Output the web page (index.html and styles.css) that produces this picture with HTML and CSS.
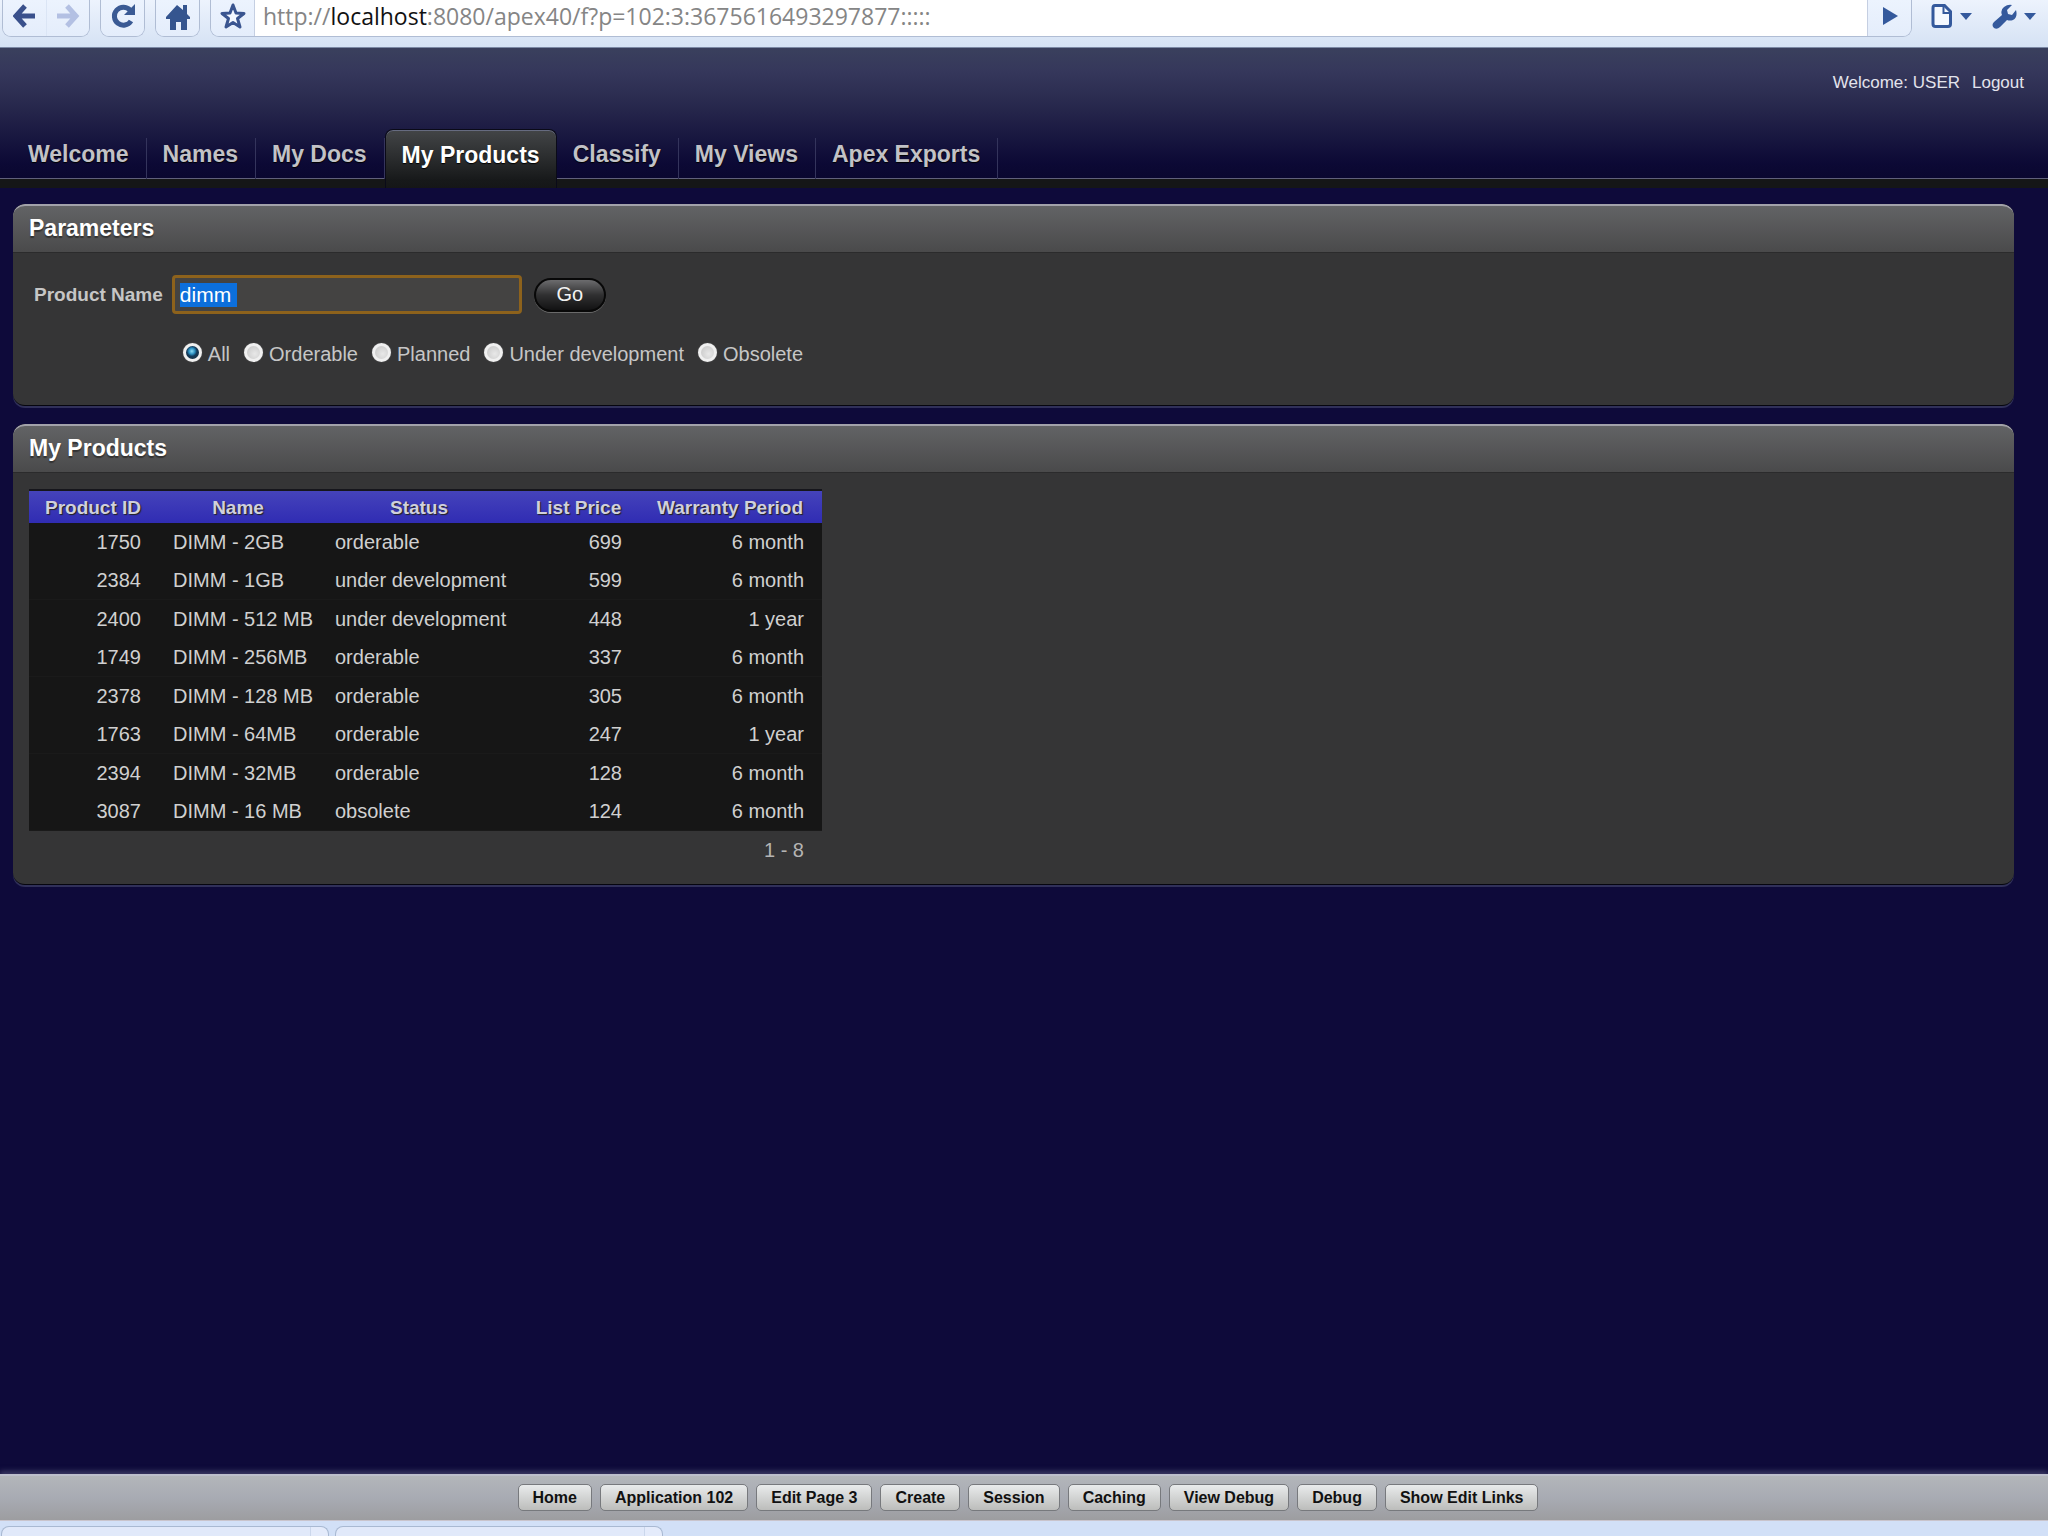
FILE: index.html
```html
<!DOCTYPE html>
<html lang="en">
<head>
  <meta charset="UTF-8">
  <meta name="viewport" content="width=device-width, initial-scale=1.0">
  <title>My Products</title>
  <link rel="stylesheet" href="styles.css">
</head>
<body>

<div class="toolbar">
  <div class="tool-group">
    <button class="tool" aria-label="Back">
      <svg width="24" height="24" viewBox="0 0 24 24"><path d="M12 2L3 12l9 10M3 12h19" fill="none" stroke="#39508c" stroke-width="5"/></svg>
    </button>
    <button class="tool tool-next" aria-label="Forward">
      <svg width="24" height="24" viewBox="0 0 24 24"><path d="M11 2l9 10-9 10M20 12H1" fill="none" stroke="#b3c0e3" stroke-width="5"/></svg>
    </button>
  </div>
  <div class="tool-group">
    <button class="tool" aria-label="Reload">
      <svg width="26" height="26" viewBox="0 0 26 26"><path d="M20 7a9 9 0 1 0 1 11" fill="none" stroke="#3a5a94" stroke-width="5"/><path d="M25 1v11H14z" fill="#3a5a94"/></svg>
    </button>
  </div>
  <div class="tool-group">
    <button class="tool" aria-label="Home">
      <svg width="26" height="28" viewBox="0 0 26 28"><path d="M12 3l6 5V3h4v9l3 3v2h-3v11h-6v-8h-5v8H5V17H1v-2z" fill="#35558f"/></svg>
    </button>
  </div>
  <div class="omnibox">
    <button class="tool" aria-label="Bookmark this page">
      <svg width="28" height="28" viewBox="0 0 28 28"><path d="M14 3l3 8 8 .5-6.500 5L21 25l-7-4.500L7 25l2.500-8.500L3 11.500l8-.5z" fill="#f4f8ff" stroke="#3a5590" stroke-width="3" stroke-linejoin="round"/></svg>
    </button>
    <div class="address" role="textbox" aria-label="Address">http://<span class="host">localhost</span>:8080/apex40/f?p=102:3:3675616493297877:::::</div>
    <button class="tool" aria-label="Go to address">
      <svg width="20" height="20" viewBox="0 0 20 20"><path d="M3 1l15 9-15 9z" fill="#34599c"/></svg>
    </button>
  </div>
  <div class="menus">
    <button class="menu" aria-label="Page menu">
      <svg width="22" height="26" viewBox="0 0 22 26"><path d="M4 2.500h9.500l6 6V21q0 2.500-2.500 2.500H4.500Q2 23.500 2 21V5q0-2.500 2-2.500z" fill="#f4f8ff" stroke="#34599c" stroke-width="3"/><path d="M12.500 3v7H20" fill="none" stroke="#34599c" stroke-width="2"/></svg>
      <svg width="12" height="8" viewBox="0 0 12 8"><path d="M0 1h12L6 8z" fill="#34599c"/></svg>
    </button>
    <button class="menu" aria-label="Tools menu">
      <svg width="25" height="25" viewBox="0 0 25 25"><path d="M20 1l-5 5 1 4 4 1 4-5q2 7-3 10-3 1-6 0l-7 7q-3 3-6 1-3-3 0-6l8-7Q8 6 12 3q4-3 8-2z" fill="#34599c"/></svg>
      <svg width="12" height="8" viewBox="0 0 12 8"><path d="M0 1h12L6 8z" fill="#34599c"/></svg>
    </button>
  </div>
</div>

<header class="header">
  <div class="user-links">
    <span>Welcome: USER</span>
    <a href="#">Logout</a>
  </div>
  <nav class="tabs">
    <a class="tab" href="#">Welcome</a>
    <a class="tab" href="#">Names</a>
    <a class="tab" href="#">My Docs</a>
    <a class="tab active" href="#">My Products</a>
    <a class="tab" href="#">Classify</a>
    <a class="tab" href="#">My Views</a>
    <a class="tab" href="#">Apex Exports</a>
  </nav>
</header>

<main class="content">
  <section class="region">
    <h2 class="region-title">Parameters</h2>
    <form class="params">
      <label class="field-label" for="product-name">Product Name</label>
      <div class="field">
        <input class="text-field" type="text" id="product-name" value="dimm ">
        <button class="go-btn" type="button">Go</button>
      </div>
      <div class="radios">
        <label class="radio"><input type="radio" name="status" checked>All</label>
        <label class="radio"><input type="radio" name="status">Orderable</label>
        <label class="radio"><input type="radio" name="status">Planned</label>
        <label class="radio"><input type="radio" name="status">Under development</label>
        <label class="radio"><input type="radio" name="status">Obsolete</label>
      </div>
    </form>
  </section>

  <section class="region">
    <h2 class="region-title">My Products</h2>
    <div class="report">
      <table class="report-table">
        <colgroup>
          <col class="col-id">
          <col class="col-name">
          <col class="col-status">
          <col class="col-price">
          <col class="col-warranty">
        </colgroup>
        <thead>
          <tr><th>Product ID</th><th>Name</th><th>Status</th><th>List Price</th><th>Warranty Period</th></tr>
        </thead>
        <tbody>
          <tr><td class="num">1750</td><td>DIMM - 2GB</td><td>orderable</td><td class="num">699</td><td class="num">6 month</td></tr>
          <tr><td class="num">2384</td><td>DIMM - 1GB</td><td>under development</td><td class="num">599</td><td class="num">6 month</td></tr>
          <tr><td class="num">2400</td><td>DIMM - 512 MB</td><td>under development</td><td class="num">448</td><td class="num">1 year</td></tr>
          <tr><td class="num">1749</td><td>DIMM - 256MB</td><td>orderable</td><td class="num">337</td><td class="num">6 month</td></tr>
          <tr><td class="num">2378</td><td>DIMM - 128 MB</td><td>orderable</td><td class="num">305</td><td class="num">6 month</td></tr>
          <tr><td class="num">1763</td><td>DIMM - 64MB</td><td>orderable</td><td class="num">247</td><td class="num">1 year</td></tr>
          <tr><td class="num">2394</td><td>DIMM - 32MB</td><td>orderable</td><td class="num">128</td><td class="num">6 month</td></tr>
          <tr><td class="num">3087</td><td>DIMM - 16 MB</td><td>obsolete</td><td class="num">124</td><td class="num">6 month</td></tr>
        </tbody>
        <tfoot>
          <tr><td class="num" colspan="5">1 - 8</td></tr>
        </tfoot>
      </table>
    </div>
  </section>
</main>

<footer class="dev-toolbar">
  <button class="dev-btn">Home</button>
  <button class="dev-btn">Application 102</button>
  <button class="dev-btn">Edit Page 3</button>
  <button class="dev-btn">Create</button>
  <button class="dev-btn">Session</button>
  <button class="dev-btn">Caching</button>
  <button class="dev-btn">View Debug</button>
  <button class="dev-btn">Debug</button>
  <button class="dev-btn">Show Edit Links</button>
</footer>

<div class="downloads">
  <div class="download"></div>
  <div class="download"></div>
</div>

<script>
  const productName = document.querySelector('#product-name');
  productName.focus();
  productName.select();
</script>

</body>
</html>
```
FILE: styles.css
```css
* {
  box-sizing: border-box;
}

body {
  margin: 0;
  min-height: 100vh;
  display: flex;
  flex-direction: column;
  background-color: #0e0a3a;
  color: #c6c6c6;
  font-family: "Liberation Sans", Arial, sans-serif;
  font-size: 20px;
  line-height: 24px;
}

button {
  font-family: inherit;
  cursor: pointer;
}

/* Browser toolbar */
.toolbar {
  display: flex;
  gap: 10px;
  height: 48px;
  padding: 0 12px 10px 2px;
  background: linear-gradient(#edf3fd, #d5e2f4);
  border-bottom: 1px solid #7c89a5;
}

.tool-group,
.omnibox {
  display: flex;
  border: 1px solid #b0bdd4;
  border-top: none;
  border-radius: 0 0 9px 9px;
  overflow: hidden;
}

.tool {
  display: flex;
  align-items: center;
  justify-content: center;
  width: 43px;
  padding: 0 0 5px;
  border: none;
  background: linear-gradient(#ecf3fe, #e4edfb);
}

.tool-next {
  border-left: 1px solid #dbe5f5;
}

.omnibox {
  flex: 1;
}

.address {
  flex: 1;
  padding-left: 8px;
  background: #fff;
  border-left: 1px solid #c5cfe2;
  border-right: 1px solid #c5cfe2;
  color: #858585;
  font-family: "Open Sans", "Noto Sans", sans-serif;
  font-size: 23px;
  line-height: 32px;
}

.host {
  color: #111;
}

.menus {
  display: flex;
  gap: 20px;
  padding: 0 0 5px 9px;
}

.menu {
  display: flex;
  align-items: center;
  gap: 7px;
  padding: 0;
  border: none;
  background: none;
}

/* Header and tabs */
.header {
  display: flex;
  flex-direction: column;
  height: 140px;
  background: linear-gradient(#3a405d 0, #35375b 24px, #2b2c50 50px, #0c0935 115px, #0a0730 129px, #0a0730 130px, #60607a 130px, #60607a 131px, #151617 131px);
}

.user-links {
  display: flex;
  justify-content: flex-end;
  gap: 12px;
  padding: 23px 24px 11px;
  color: #e3e3ec;
  font-size: 17px;
}

.user-links a {
  color: inherit;
  text-decoration: none;
}

.tabs {
  display: flex;
  align-items: flex-end;
  flex: 1;
  padding: 22px 12px 9px;
}

.tab {
  height: 41px;
  padding: 4px 17px 0 16px;
  border-right: 1px solid #34345c;
  color: #c2c2c6;
  font-size: 23px;
  font-weight: bold;
  text-decoration: none;
  text-shadow: 0 1px 1px #000;
}

.tab.active {
  height: 59px;
  margin-bottom: -9px;
  padding: 13px 16px 0;
  background: linear-gradient(#434547, #17191a 50px, #151617);
  border: 1px solid #0a0a18;
  border-bottom: none;
  border-radius: 8px 8px 0 0;
  box-shadow: inset 0 1px 0 #666b80;
  color: #fff;
}

/* Regions */
.content {
  flex: 1;
  padding: 16px 34px 16px 13px;
}

.region {
  margin-bottom: 18px;
  border-bottom: 1px solid #05050f;
  border-radius: 12px;
  box-shadow: 0 2px 0 #303059;
  background: #353536;
  overflow: hidden;
}

.region-title {
  margin: 0;
  height: 49px;
  padding: 11px 16px 0;
  background: linear-gradient(#626365, #4a4a4b);
  border-top: 2px solid #a2a2aa;
  border-bottom: 1px solid #2b2b2c;
  border-radius: 12px 12px 0 0;
  color: #fff;
  font-size: 23px;
  line-height: 22px;
  text-shadow: 0 2px 1px #333;
}

.params {
  display: grid;
  grid-template-columns: auto 1fr;
  align-items: center;
  gap: 28px 9px;
  padding: 22px 20px 39px 21px;
}

.field-label {
  font-size: 19px;
  font-weight: bold;
}

.field {
  display: flex;
  align-items: center;
  gap: 12px;
}

.text-field {
  width: 350px;
  height: 39px;
  padding: 0 5px;
  background: #444342;
  border: 3px solid #8d621c;
  border-radius: 4px;
  outline: none;
  color: #fff;
  font-family: inherit;
  font-size: 21px;
}

.text-field::selection {
  background: #0c6fdc;
  color: #fff;
}

.go-btn {
  width: 72px;
  height: 34px;
  padding: 0;
  background: linear-gradient(#6c6c6e, #303031 50%, #121213);
  border: 2px solid #080808;
  border-radius: 17px;
  box-shadow: 0 1px 0 #6a6a6a;
  color: #f2f2f2;
  font-size: 20px;
}

.radios {
  grid-column: 2;
  display: flex;
  gap: 14px;
  padding-left: 11px;
}

.radio {
  display: flex;
  align-items: center;
  gap: 6px;
}

.radio input {
  appearance: none;
  width: 19px;
  height: 19px;
  margin: 0 0 4px;
  border: 3px solid #f0f0f0;
  border-radius: 50%;
  background: radial-gradient(circle at 60% 60%, #e8e8e8, #c4c4c4);
  box-shadow: 0 0 1px #888;
}

.radio input:checked {
  background: radial-gradient(circle at 45% 40%, #8fdcf5 0, #2a8fc0 3px, #123a5c 5px, #16364f 6px);
}

/* Report */
.report {
  padding: 16px;
}

.report-table {
  width: 793px;
  table-layout: fixed;
  border-collapse: separate;
  border-spacing: 0;
}

.col-id {
  width: 128px;
}

.col-name {
  width: 162px;
}

.col-status {
  width: 200px;
}

.col-price {
  width: 119px;
}

.report-table th {
  height: 34px;
  padding: 2px 0 0;
  background: linear-gradient(#4543bb, #302cb3);
  border-top: 2px solid #16161c;
  color: #d0d0dc;
  font-size: 19px;
  text-shadow: 1px 1px 1px #222;
}

.report-table td {
  height: 38px;
  padding: 0 16px;
  white-space: nowrap;
}

.report-table .num {
  text-align: right;
}

.report-table tbody td {
  background: #161616;
  color: #d0d0d0;
}

.report-table tbody tr:nth-child(even) td {
  height: 39px;
  border-bottom: 1px solid #1a1a1a;
}

.report-table td:last-child {
  padding-right: 18px;
}

.report-table tfoot td {
  height: 37px;
  color: #b4b4b4;
}

/* Developer toolbar */
.dev-toolbar {
  display: flex;
  justify-content: center;
  gap: 8px;
  padding: 8px 0 9px 8px;
  background: linear-gradient(#b3b6ba, #a8abb3 50%, #9d9da0);
  border-top: 2px solid #bcbecb;
  border-bottom: 1px solid #c9c4cc;
  box-shadow: 0 -3px 5px #3a3862;
}

.dev-btn {
  height: 27px;
  padding: 0 14px;
  background: linear-gradient(#e9ebec, #bcbdbb);
  border: 1px solid #77797d;
  border-radius: 5px;
  color: #111;
  font-size: 16px;
  font-weight: bold;
}

/* Download bar */
.downloads {
  display: flex;
  gap: 6px;
  height: 15px;
  padding: 5px 1px 0;
  background: #d2e0f7;
}

.download {
  width: 328px;
  background: linear-gradient(90deg, #e1e9fa 308px, #cbd7ec 308px, #cbd7ec 309px, #e4ebfb 309px);
  border: 1px solid #a9b9d2;
  border-bottom: none;
  border-radius: 8px 8px 0 0;
}
```
